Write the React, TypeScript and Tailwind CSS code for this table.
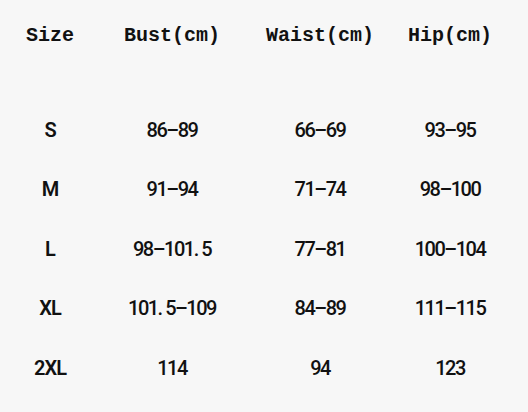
import React from 'react';

const rows = [
  { size: 'S', bust: '86–89', waist: '66–69', hip: '93–95' },
  { size: 'M', bust: '91–94', waist: '71–74', hip: '98–100' },
  { size: 'L', bust: '98–101. 5', waist: '77–81', hip: '100–104' },
  { size: 'XL', bust: '101. 5–109', waist: '84–89', hip: '111–115' },
  { size: '2XL', bust: '114', waist: '94', hip: '123' },
];

const cols = 'grid grid-cols-[100px_144px_152px_108px] items-center justify-items-center';

const App: React.FC = () => {
  return (
    <div className="w-[528px] h-[412px] bg-[#f7f7f7] text-[#111] overflow-hidden pt-4">
      {/* Header */}
      <div
        className={`${cols} h-10 text-[20px] font-bold`}
        style={{ fontFamily: '"Liberation Mono", "DejaVu Sans Mono", monospace' }}
      >
        <div>Size</div>
        <div>Bust(cm)</div>
        <div>Waist(cm)</div>
        <div>Hip(cm)</div>
      </div>

      {/* Rows */}
      <div
        className="mt-[44px] text-[20px] font-medium tracking-[-1.5px]"
        style={{ fontFamily: 'Roboto, "Liberation Sans", sans-serif' }}
      >
        {rows.map((r) => (
          <div key={r.size} className={`${cols} h-[59.5px]`}>
            <div className="font-semibold tracking-[-1px]">{r.size}</div>
            <div>{r.bust}</div>
            <div>{r.waist}</div>
            <div>{r.hip}</div>
          </div>
        ))}
      </div>
    </div>
  );
};

export default App;
